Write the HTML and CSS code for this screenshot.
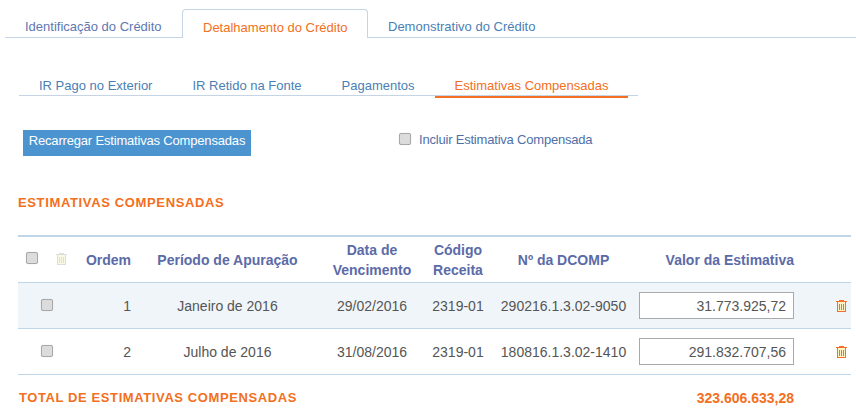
FILE: index.html
```html
<!DOCTYPE html>
<html lang="pt-BR">

<head>
    <meta charset="UTF-8">
    <meta name="viewport" content="width=device-width, initial-scale=1.0">
    <title>Estimativas Compensadas</title>
    <link rel="stylesheet" href="styles.css">
</head>

<body>

    <ul class="tabs">
        <li class="tab">Identificação do Crédito</li>
        <li class="tab active">Detalhamento do Crédito</li>
        <li class="tab">Demonstrativo do Crédito</li>
    </ul>

    <ul class="subtabs">
        <li class="subtab">IR Pago no Exterior</li>
        <li class="subtab">IR Retido na Fonte</li>
        <li class="subtab">Pagamentos</li>
        <li class="subtab active">Estimativas Compensadas</li>
    </ul>

    <div class="actions">
        <button class="btn">Recarregar Estimativas Compensadas</button>
        <label class="include"><input type="checkbox" class="check">Incluir Estimativa Compensada</label>
    </div>

    <h2 class="section-title">ESTIMATIVAS COMPENSADAS</h2>

    <table class="grid">
        <colgroup>
            <col class="col-select">
            <col class="col-order">
            <col class="col-period">
            <col class="col-date">
            <col class="col-code">
            <col class="col-dcomp">
            <col class="col-value">
            <col class="col-remove">
        </colgroup>
        <thead>
            <tr>
                <th>
                    <div class="head-select">
                        <input type="checkbox" class="check">
                        <svg class="trash muted" viewBox="0 0 11 12"><path d="M3.5 1.5V.5h4v1M0 1.5h11M1.5 1.5v10h8v-10M3.5 4v5.5M5.5 4v5.5M7.5 4v5.5"/></svg>
                    </div>
                </th>
                <th class="order">Ordem</th>
                <th>Período de Apuração</th>
                <th>Data de<br>Vencimento</th>
                <th>Código<br>Receita</th>
                <th>Nº da DCOMP</th>
                <th class="value">Valor da Estimativa</th>
                <th></th>
            </tr>
        </thead>
        <tbody>
            <tr class="odd">
                <td><input type="checkbox" class="check"></td>
                <td class="order">1</td>
                <td>Janeiro de 2016</td>
                <td>29/02/2016</td>
                <td>2319-01</td>
                <td>290216.1.3.02-9050</td>
                <td class="value"><input type="text" class="amount" value="31.773.925,72"></td>
                <td class="remove"><svg class="trash" viewBox="0 0 11 12"><path d="M3.5 1.5V.5h4v1M0 1.5h11M1.5 1.5v10h8v-10M3.5 4v5.5M5.5 4v5.5M7.5 4v5.5"/></svg></td>
            </tr>
            <tr>
                <td><input type="checkbox" class="check"></td>
                <td class="order">2</td>
                <td>Julho de 2016</td>
                <td>31/08/2016</td>
                <td>2319-01</td>
                <td>180816.1.3.02-1410</td>
                <td class="value"><input type="text" class="amount" value="291.832.707,56"></td>
                <td class="remove"><svg class="trash" viewBox="0 0 11 12"><path d="M3.5 1.5V.5h4v1M0 1.5h11M1.5 1.5v10h8v-10M3.5 4v5.5M5.5 4v5.5M7.5 4v5.5"/></svg></td>
            </tr>
        </tbody>
        <tfoot>
            <tr>
                <td colspan="6" class="total-label">TOTAL DE ESTIMATIVAS COMPENSADAS</td>
                <td class="value total-value">323.606.633,28</td>
                <td></td>
            </tr>
        </tfoot>
    </table>

</body>

</html>
```

FILE: styles.css
```css
html,
body {
    margin: 0;
    padding: 0;
    height: 100%;
    overflow: hidden;
    background: #fff;
    font-family: "Liberation Sans", Arial, sans-serif;
    font-size: 13px;
    color: #555;
}

.tabs {
    display: flex;
    list-style: none;
    height: 28px;
    margin: 9px 0 0 5px;
    padding: 0;
    border-bottom: 1px solid #c5d5e6;
}

.tab {
    padding: 10px 20px 0;
    font-size: 13px;
    line-height: 16px;
    white-space: nowrap;
    color: #4a7fb5;
}

.tab:first-child {
    width: 137px;
    color: #5f78b0;
}

.tab.active {
    height: 29px;
    box-sizing: border-box;
    width: 186px;
    padding-top: 10px;
    background: #fff;
    border: 1px solid #c5d5e6;
    border-bottom: none;
    border-radius: 4px 4px 0 0;
    color: #f36f21;
}

.subtabs {
    display: flex;
    list-style: none;
    width: 619px;
    height: 22px;
    margin: 35px 0 0 19px;
    padding: 0;
    border-bottom: 1px solid #c5d5e6;
}

.subtab {
    padding: 5px 20px 0;
    line-height: 16px;
    color: #4a7fb5;
}

.subtab.active {
    height: 18px;
    color: #f36f21;
    border-bottom: 2px solid #f36f21;
}

.actions {
    display: flex;
    align-items: flex-start;
    margin: 34px 0 0 23px;
}

.btn {
    width: 228px;
    height: 26px;
    padding: 0 0 5px;
    border: none;
    background: #4b94d0;
    color: #fff;
    font-family: inherit;
    font-size: 13px;
    letter-spacing: -0.18px;
    white-space: nowrap;
}

.include {
    display: flex;
    align-items: center;
    margin-left: 148px;
    height: 18px;
    letter-spacing: -0.2px;
    color: #4f6fa8;
}

.check {
    appearance: none;
    box-sizing: border-box;
    width: 12px;
    height: 12px;
    margin: 0;
    background: #dcdcdc;
    border: 1px solid #a8a8a8;
    border-radius: 2px;
    box-shadow: 0 0 1px #ccc;
}

.include .check {
    margin-right: 8px;
}

.section-title {
    margin: 39px 0 0 18px;
    font-size: 13px;
    line-height: 16px;
    letter-spacing: 0.64px;
    color: #f36f21;
}

.grid {
    table-layout: fixed;
    width: 833px;
    margin: 24px 0 0 18px;
    border-collapse: collapse;
    border-top: 2px solid #bfd5e8;
}

.col-select { width: 57px; }
.col-order { width: 64px; }
.col-period { width: 177px; }
.col-date { width: 112px; }
.col-code { width: 60px; }
.col-dcomp { width: 151px; }
.col-value { width: 155px; }
.col-remove { width: 57px; }

.grid th {
    height: 45px;
    padding: 0;
    font-size: 14px;
    line-height: 20px;
    color: #5b6ba8;
    text-align: center;
    border-bottom: 1px solid #bfd5e8;
}

.grid td {
    height: 45px;
    padding: 0;
    font-size: 14px;
    text-align: center;
    border-bottom: 1px solid #bfd5e8;
}

.grid .order {
    padding-right: 8px;
    text-align: right;
}

.grid .value {
    text-align: right;
}

.grid td .check {
    margin-bottom: 3px;
    vertical-align: middle;
}

.odd {
    background: #f0f5fa;
}

.head-select {
    display: flex;
    align-items: center;
    padding-left: 8px;
    margin-bottom: 4px;
    gap: 18px;
}

.trash {
    display: block;
    width: 11px;
    height: 12px;
    fill: #fff2c4;
    stroke: #f5702c;
    stroke-width: 1;
    shape-rendering: crispEdges;
}

.trash.muted {
    margin-top: 2px;
    fill: #f8f8e4;
    stroke: #dedede;
}

.amount {
    box-sizing: border-box;
    display: block;
    width: 155px;
    height: 27px;
    padding: 0 7px;
    border: 1px solid #a9a9a9;
    background: #fff;
    color: #555;
    font-family: inherit;
    font-size: 14px;
    text-align: right;
}

.grid .remove .trash {
    margin-left: 42px;
}

.grid tfoot td {
    border-bottom: none;
    font-size: 13px;
    font-weight: bold;
    letter-spacing: 0.6px;
    color: #f36f21;
}

.grid .total-label {
    padding-left: 1px;
    text-align: left;
}

.grid tfoot .total-value {
    font-size: 14px;
    letter-spacing: 0;
}
```
